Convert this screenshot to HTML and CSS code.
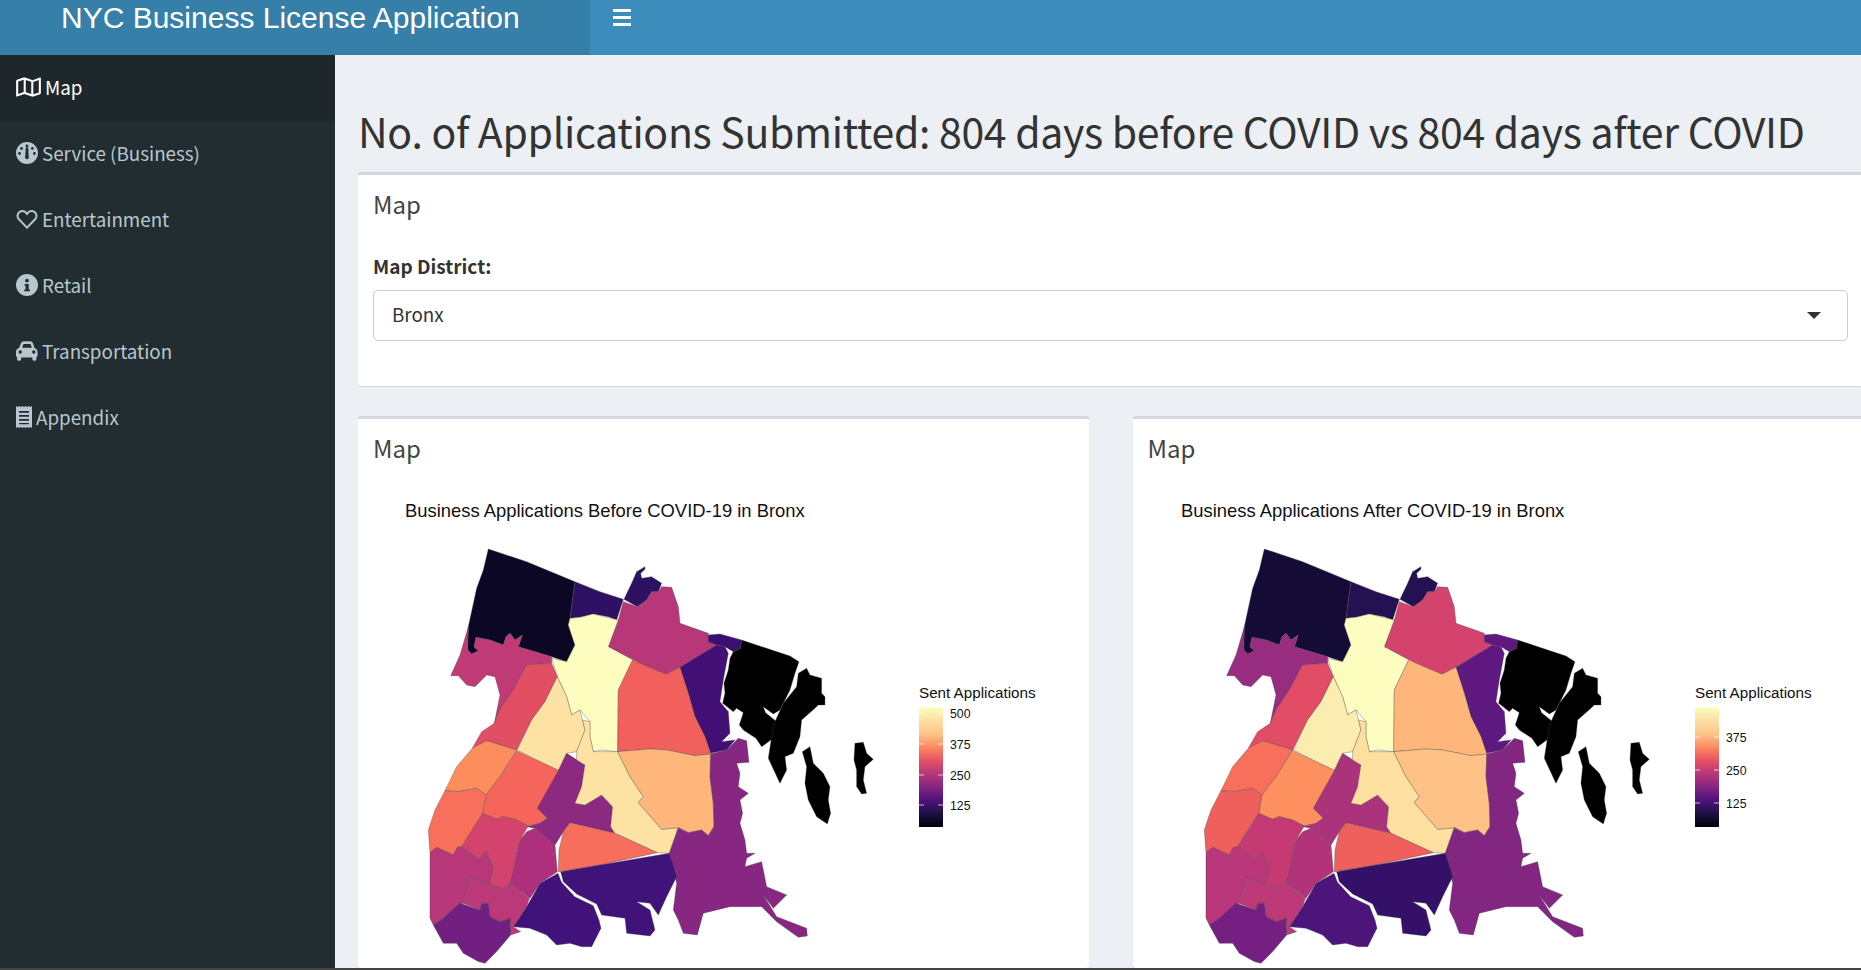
FILE: index.html
```html
<!DOCTYPE html>
<html>
<head>
<title>NYC Business License Application</title>
<link rel="stylesheet" href="styles.css">
</head>
<body>
  <header class="topbar">
    <div class="brand">NYC Business License Application</div>
    <div class="toggle"><span></span><span></span><span></span></div>
  </header>

  <div class="layout">
    <nav class="sidebar">
      <a class="item active">
        <svg class="icon icon-map" viewBox="0 0 576 512"><path d="M560.02 32c-1.96 0-3.98.37-5.96 1.16L384.01 96H384L212 35.28A64.252 64.252 0 0 0 191.76 32c-6.69 0-13.37 1.05-19.81 3.14L20.12 87.95A32.006 32.006 0 0 0 0 117.66v346.32C0 473.17 7.53 480 15.99 480c1.96 0 3.97-.37 5.96-1.16L192 416l172 60.71a63.98 63.98 0 0 0 40.05.15l151.83-52.81A31.996 31.996 0 0 0 576 394.34V48.02c0-9.19-7.53-16.02-15.98-16.02zM224 90.42l128 45.19v285.97l-128-45.19V90.42zM48 418.05V129.07l128-44.53v286.2l-.64.23L48 418.05zm480-35.13l-128 44.53V141.26l.64-.24L528 93.95v288.97z"/></svg>
        Map
      </a>
      <a class="item">
        <svg class="icon" viewBox="0 0 22 22"><circle cx="11" cy="11" r="11"/><g class="cut"><circle cx="11" cy="4" r="1.4"/><circle cx="5.6" cy="6.4" r="1.4"/><circle cx="16.4" cy="6.4" r="1.4"/><circle cx="3.6" cy="11.5" r="1.4"/><circle cx="18.4" cy="11.5" r="1.4"/><path d="M9.8 5.5h2.4l.6 10a1.8 1.8 0 1 1-3.6 0z"/></g></svg>
        Service (Business)
      </a>
      <a class="item">
        <svg class="icon" viewBox="0 0 22 22"><path class="line" d="M11 19.6 2.9 11.3C.4 8.7 1.4 4.2 4.9 3.3c2.4-.6 4.6.4 6.1 2.5 1.5-2.1 3.7-3.1 6.1-2.5 3.5.9 4.5 5.4 2 8z"/></svg>
        Entertainment
      </a>
      <a class="item">
        <svg class="icon" viewBox="0 0 22 22"><circle cx="11" cy="11" r="11"/><g class="cut"><circle cx="11" cy="6.6" r="1.9"/><path d="M8.6 10h4.1v5.4h1.2v1.8H8.3v-1.8h1.3v-3.6h-1z"/></g></svg>
        Retail
      </a>
      <a class="item">
        <svg class="icon" viewBox="0 0 24 22"><path d="M5.5 2.6C6 1.2 7.2.4 8.6.4h6.8c1.4 0 2.6.8 3.1 2.2l1.7 5c1.9.5 3.3 2.2 3.3 4.2v3.8c0 .9-.5 1.700-1.200 2.100v2.300c0 .8-.7 1.500-1.500 1.500h-1.400c-.8 0-1.500-.7-1.500-1.500v-1.900H5.600V20c0 .8-.7 1.500-1.500 1.500H2.700c-.8 0-1.500-.7-1.500-1.500v-2.300C.5 17.300 0 16.500 0 15.600v-3.800c0-2 1.400-3.700 3.300-4.200zM7.900 3.800 6.600 7.400h10.800l-1.300-3.600c-.1-.3-.4-.5-.7-.5H8.600c-.3 0-.6.2-.7.500z"/><circle class="cut" cx="4.600" cy="12.200" r="1.900"/><circle class="cut" cx="19.400" cy="12.200" r="1.900"/></svg>
        Transportation
      </a>
      <a class="item">
        <svg class="icon icon-receipt" viewBox="0 0 16 22"><path d="M0 0l1.600 1.100L3.200 0l1.600 1.100L6.400 0 8 1.100 9.600 0l1.600 1.100L12.800 0l1.600 1.100L16 0v22l-1.600-1.100-1.600 1.100-1.600-1.100-1.600 1.100L8 20.900 6.400 22l-1.600-1.100L3.200 22l-1.600-1.100L0 22z"/><path class="cut" d="M3 5h10v1.800H3zM3 9h10v1.800H3zM3 13h10v1.800H3zM3 17h10v1.300H3z"/></svg>
        Appendix
      </a>
    </nav>

    <main class="content">
      <h1>No. of Applications Submitted: 804 days before COVID vs 804 days after COVID</h1>

      <section class="box box-filter">
        <h3 class="box-title">Map</h3>
        <label class="field-label">Map District:</label>
        <div class="select">Bronx<span class="caret"></span></div>
      </section>

      <div class="plots">
        <section class="box">
          <h3 class="box-title">Map</h3>
          <svg class="plot" viewBox="0 0 700 494">
            <defs>
              <linearGradient id="magma" x1="0" y1="1" x2="0" y2="0">
                <stop offset="0" stop-color="#000004"/>
                <stop offset=".11" stop-color="#1c1044"/>
                <stop offset=".22" stop-color="#4f127b"/>
                <stop offset=".33" stop-color="#812581"/>
                <stop offset=".44" stop-color="#b5367a"/>
                <stop offset=".55" stop-color="#e55064"/>
                <stop offset=".66" stop-color="#fb8761"/>
                <stop offset=".77" stop-color="#fec287"/>
                <stop offset="1" stop-color="#fcfdbf"/>
              </linearGradient>
              <polygon id="a" points="265,57 380,95 525,155 520,190 510,265 505,285 525,345 500,395 455,380 355,350 367,315 345,330 330,310 318,320 310,345 270,330 228,322 222,350 235,362 215,372 203,360 205,290 230,175 250,120"/>
              <polygon id="b" points="525,155 600,185 670,208 650,270 625,260 580,252 540,262 510,265 520,190"/>
              <polygon id="c" points="710,125 735,110 735,118 722,130 725,145 755,140 785,160 775,185 755,185 740,210 712,230 672,208 695,160"/>
              <polygon id="d" points="775,185 785,170 815,172 835,230 840,280 925,310 925,335 950,345 840,412 798,433 740,410 625,350 655,270 670,215 712,230 740,210 755,185"/>
              <polygon id="e" points="925,315 960,312 1025,330 1022,355 1000,365 975,350 950,345 925,335"/>
              <polygon id="f" points="1025,330 1100,355 1170,378 1197,395 1185,430 1170,480 1140,540 1120,552 1090,530 1097,548 1130,575 1120,625 1085,650 1068,625 1030,600 1018,585 1030,548 1010,535 1000,545 975,525 968,520 975,490 972,460 985,420 990,385 1000,365 1022,355"/>
              <polygon id="g" points="1220,415 1230,435 1265,445 1265,490 1275,500 1275,525 1255,525 1245,535 1205,570 1200,620 1180,670 1155,680 1160,720 1140,760 1105,685 1115,620 1125,575 1150,520 1190,470 1195,430"/>
              <polygon id="h" points="1207,665 1230,650 1240,700 1270,730 1290,770 1285,810 1292,850 1282,882 1250,860 1225,810 1215,760 1220,710"/>
              <polygon id="i" points="1365,640 1390,637 1400,670 1420,688 1395,710 1390,750 1400,790 1385,792 1370,770 1370,720 1362,690"/>
              <polygon id="j" points="840,412 950,345 975,350 985,370 970,450 960,515 985,545 990,610 965,635 1005,630 980,660 932,670 915,620 885,560 865,490"/>
              <polygon id="k" points="510,265 540,262 580,252 655,270 625,350 698,390 655,480 653,665 605,660 580,665 570,620 570,575 540,540 515,555 500,500 472,440 455,385 500,395 525,345 505,285"/>
              <polygon id="l" points="698,390 798,433 840,412 865,490 885,560 915,620 932,672 885,677 800,660 750,657 653,665 655,480"/>
              <polygon id="m" points="205,290 203,360 215,372 235,362 222,350 228,322 270,330 310,345 318,320 330,310 345,330 367,315 355,350 455,380 455,400 380,405 340,480 300,540 283,580 300,495 285,440 260,435 225,470 200,465 175,437 152,437 180,375"/>
              <polygon id="n" points="380,405 455,400 472,440 435,515 395,570 350,660 260,632 217,655 245,605 283,580 300,540 340,480"/>
              <polygon id="o" points="472,440 500,500 515,555 540,540 555,600 530,665 500,670 475,722 420,695 352,660 395,570 435,515"/>
              <polygon id="p" points="260,632 350,660 300,740 258,795 230,775 175,785 135,782 170,710 217,655"/>
              <polygon id="q" points="350,662 420,695 478,722 440,800 412,835 442,865 420,880 385,888 350,870 310,860 290,868 248,850 258,795 300,740"/>
              <polygon id="r" points="135,782 175,785 230,775 258,795 248,850 185,950 160,975 110,952 90,968 85,900 105,840"/>
              <polygon id="s" points="500,670 555,705 545,770 525,820 555,825 605,795 638,830 632,890 645,910 510,878 490,905 465,945 405,895 380,890 420,880 442,865 412,835 475,722"/>
              <polygon id="t" points="555,600 548,570 570,575 570,620 580,665 653,665 690,740 730,800 715,818 785,898 835,893 808,970 772,968 645,910 632,890 638,830 605,795 555,825 525,820 545,770 555,705 530,690 530,665"/>
              <polygon id="u" points="653,665 750,657 800,660 885,677 935,672 930,740 940,820 942,890 925,917 905,900 865,908 838,893 785,898 715,818 730,800 690,740"/>
              <polygon id="v" points="932,672 980,660 1015,625 1040,632 1047,697 1010,700 1020,730 1015,770 1045,790 1020,810 1028,850 1020,880 1035,930 1040,970 1065,970 1040,985 1035,1010 1085,995 1100,1070 1160,1095 1120,1135 1090,1095 1130,1160 1220,1195 1222,1218 1195,1222 1130,1175 1085,1130 990,1130 910,1150 892,1215 850,1210 835,1170 820,1140 830,1060 808,970 835,893 865,908 905,900 925,917 942,890 940,820 930,740"/>
              <polygon id="w" points="510,878 645,910 772,968 600,1005 475,1025 477,960 490,905"/>
              <polygon id="x" points="482,1025 600,1005 808,970 830,1040 800,1100 775,1155 750,1120 710,1115 750,1140 765,1200 750,1218 680,1210 675,1165 605,1155 590,1122 530,1092 490,1055"/>
              <polygon id="y" points="474,1030 484,1056 524,1100 580,1127 597,1170 603,1195 575,1250 545,1250 510,1240 470,1245 440,1215 390,1195 340,1190 380,1130 420,1060"/>
              <polygon id="z" points="405,895 465,945 472,1025 420,1060 390,1105 330,1060 360,930 380,905"/>
              <polygon id="aa" points="248,850 290,868 310,860 350,870 385,888 360,930 330,1060 310,1075 268,1062 280,1010 258,965 235,988 185,950"/>
              <polygon id="ab" points="90,968 110,952 160,975 172,952 185,950 235,988 258,965 280,1010 268,1062 210,1043 188,1120 130,1165 100,1185 90,1165"/>
              <polygon id="ac" points="210,1043 268,1062 310,1075 330,1060 388,1105 380,1130 340,1190 362,1205 332,1215 330,1165 300,1175 270,1160 265,1120 245,1120 240,1140 188,1120"/>
              <polygon id="ad" points="100,1185 130,1165 180,1120 240,1140 245,1120 265,1120 270,1160 300,1175 330,1165 332,1215 290,1265 255,1300 235,1295 190,1270 170,1240 130,1240"/>
            </defs>
            <text class="plot-title" x="32" y="43">Business Applications Before COVID-19 in Bronx</text>
            <g class="regions" transform="translate(27 56) scale(.3333)">
              <use href="#a" fill="#0b0724"/>
              <use href="#b" fill="#2f1163"/>
              <use href="#c" fill="#2f1163"/>
              <use href="#d" fill="#b73779"/>
              <use href="#e" fill="#3b0f70"/>
              <use href="#f" fill="#000"/>
              <use href="#g" fill="#000"/>
              <use href="#h" fill="#000"/>
              <use href="#i" fill="#000"/>
              <use href="#j" fill="#420f75"/>
              <use href="#k" fill="#fcfdbf"/>
              <use href="#l" fill="#f1605d"/>
              <use href="#m" fill="#c03a76"/>
              <use href="#n" fill="#e34f62"/>
              <use href="#o" fill="#fde2a3"/>
              <use href="#p" fill="#fd8d5c"/>
              <use href="#q" fill="#f6655c"/>
              <use href="#r" fill="#f8705b"/>
              <use href="#s" fill="#8c2981"/>
              <use href="#t" fill="#fde2a3"/>
              <use href="#u" fill="#feb67b"/>
              <use href="#v" fill="#872781"/>
              <use href="#w" fill="#f76f5c"/>
              <use href="#x" fill="#40137a"/>
              <use href="#y" fill="#41127a"/>
              <use href="#z" fill="#ae2f7c"/>
              <use href="#aa" fill="#d3436e"/>
              <use href="#ab" fill="#b73779"/>
              <use href="#ac" fill="#bb3978"/>
              <use href="#ad" fill="#711f81"/>
            </g>
            <text class="legend-title" x="546" y="224">Sent Applications</text>
            <rect x="546" y="233" width="24" height="120" fill="url(#magma)"/>
            <path class="ticks" d="M546 239h5M565 239h5M546 270h5M565 270h5M546 301h5M565 301h5M546 331h5M565 331h5"/>
            <text class="legend-label" x="577" y="244">500</text>
            <text class="legend-label" x="577" y="275">375</text>
            <text class="legend-label" x="577" y="306">250</text>
            <text class="legend-label" x="577" y="336">125</text>
          </svg>
        </section>

        <section class="box">
          <h3 class="box-title">Map</h3>
          <svg class="plot" viewBox="0 0 700 494">
            <text class="plot-title" x="33" y="43">Business Applications After COVID-19 in Bronx</text>
            <g class="regions" transform="translate(28 56) scale(.3333)">
              <use href="#a" fill="#150b37"/>
              <use href="#b" fill="#231151"/>
              <use href="#c" fill="#231151"/>
              <use href="#d" fill="#d3436e"/>
              <use href="#e" fill="#5f187f"/>
              <use href="#f" fill="#000"/>
              <use href="#g" fill="#000"/>
              <use href="#h" fill="#000"/>
              <use href="#i" fill="#000"/>
              <use href="#j" fill="#5f187f"/>
              <use href="#k" fill="#fcfdbf"/>
              <use href="#l" fill="#feb67b"/>
              <use href="#m" fill="#982d80"/>
              <use href="#n" fill="#e24d65"/>
              <use href="#o" fill="#fbecb0"/>
              <use href="#p" fill="#f8705b"/>
              <use href="#q" fill="#fe8f5e"/>
              <use href="#r" fill="#ef5f5c"/>
              <use href="#s" fill="#ab337c"/>
              <use href="#t" fill="#fddf9f"/>
              <use href="#u" fill="#fec287"/>
              <use href="#v" fill="#822681"/>
              <use href="#w" fill="#ef5f5c"/>
              <use href="#x" fill="#341068"/>
              <use href="#y" fill="#4d147a"/>
              <use href="#z" fill="#b2337a"/>
              <use href="#aa" fill="#c63a73"/>
              <use href="#ab" fill="#b9377a"/>
              <use href="#ac" fill="#bd3977"/>
              <use href="#ad" fill="#741f81"/>
            </g>
            <text class="legend-title" x="547" y="224">Sent Applications</text>
            <rect x="547" y="233" width="24" height="120" fill="url(#magma)"/>
            <path class="ticks" d="M547 263h5M566 263h5M547 296h5M566 296h5M547 329h5M566 329h5"/>
            <text class="legend-label" x="578" y="268">375</text>
            <text class="legend-label" x="578" y="301">250</text>
            <text class="legend-label" x="578" y="334">125</text>
          </svg>
        </section>
      </div>
    </main>
  </div>

  <div class="page-end"></div>
</body>
</html>
```

FILE: styles.css
```css
body {
  margin: 0;
  height: 100vh;
  overflow: hidden;
  display: flex;
  flex-direction: column;
  font-family: "Noto Sans CJK SC", "Open Sans", sans-serif;
  background-color: #ecf0f5;
  color: #333;
}

.topbar {
  flex: none;
  height: 55px;
  display: flex;
  background-color: #3c8dbc;
}

.brand {
  width: 590px;
  box-sizing: border-box;
  padding-left: 61px;
  background-color: #367fa9;
  color: white;
  font-family: "Liberation Sans", sans-serif;
  font-size: 30px;
  line-height: 36px;
}

.toggle {
  margin-left: 23px;
  padding-top: 9px;
  display: flex;
  flex-direction: column;
  gap: 4px;
}

.toggle span {
  display: block;
  width: 18px;
  height: 3px;
  background-color: white;
}

.layout {
  flex: 1;
  min-height: 0;
  display: flex;
}

.sidebar {
  flex: none;
  width: 335px;
  background-color: #222d32;
}

.item {
  height: 66px;
  box-sizing: border-box;
  padding-left: 16px;
  padding-bottom: 3px;
  display: flex;
  align-items: center;
  gap: 4px;
  font-size: 18.8px;
  color: #b8c7ce;
}

.item.active {
  background-color: #1e282c;
  color: white;
}

.icon {
  flex: none;
  width: 22px;
  height: 22px;
  fill: #b8c7ce;
}

.icon-map {
  width: 25px;
  fill: white;
}

.icon-receipt {
  width: 16px;
}

.icon .cut {
  fill: #222d32;
}

.icon .line {
  fill: none;
  stroke: #b8c7ce;
  stroke-width: 2;
}

.content {
  flex: 1;
  min-width: 0;
  overflow: hidden;
  padding-left: 23px;
}

h1 {
  margin: 47px 0 14px;
  font-size: 41px;
  font-weight: 400;
  letter-spacing: -0.31px;
  line-height: 56px;
  white-space: nowrap;
}

.box {
  background-color: white;
  border-top: 3px solid #d2d6de;
  border-radius: 3px;
  box-shadow: 0 1px 1px rgba(0, 0, 0, 0.1);
  padding: 0 15px;
}

.box-filter {
  width: 1475px;
  height: 211px;
  margin-bottom: 30px;
}

.box-title {
  margin: 0;
  padding-top: 14px;
  font-size: 24px;
  font-weight: 400;
  line-height: 30px;
  color: #444;
}

.field-label {
  display: block;
  margin-top: 35px;
  font-size: 19px;
  font-weight: 700;
  line-height: 24px;
}

.select {
  position: relative;
  height: 49px;
  margin-top: 12px;
  padding-left: 18px;
  border: 1px solid #ccc;
  border-radius: 5px;
  font-size: 18.8px;
  line-height: 46px;
}

.caret {
  position: absolute;
  top: 21px;
  right: 26px;
  border-left: 7px solid transparent;
  border-right: 7px solid transparent;
  border-top: 7px solid #333;
}

.plots {
  width: 1505px;
  display: grid;
  grid-template-columns: repeat(2, minmax(0, 1fr));
  gap: 44px;
}

.plot {
  display: block;
  width: 700px;
  height: 494px;
  margin-top: 11px;
}

.plot text {
  font-family: "Liberation Sans", sans-serif;
  fill: #111;
}

.plot .plot-title {
  font-size: 18.4px;
}

.plot .legend-title {
  font-size: 15.2px;
}

.plot .legend-label {
  font-size: 12.3px;
}

.regions use {
  stroke: #444;
  stroke-opacity: 0.7;
  stroke-width: 1.5;
}

.ticks {
  stroke: white;
  stroke-opacity: 0.7;
  fill: none;
}

.page-end {
  flex: none;
  height: 2px;
  background-color: #444;
}
```
